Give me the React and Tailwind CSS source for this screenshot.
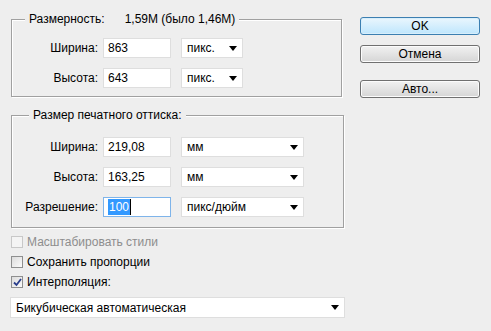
import React from "react";

function Arrow() {
  return (
    <svg width="8" height="5" viewBox="0 0 8 5" className="shrink-0">
      <path d="M0 0H8L4 5Z" fill="#000" />
    </svg>
  );
}

function Field({ value, focused }) {
  return (
    <div
      className={
        "w-[68px] h-[20px] bg-white border flex items-center pl-[4px] " +
        (focused ? "border-[#7eb4ea]" : "border-[#dedede]")
      }
    >
      {focused ? (
        <span className="bg-[#3399ff] text-white leading-[16px] px-[1px] border-r border-black">{value}</span>
      ) : (
        <span>{value}</span>
      )}
    </div>
  );
}

function Select({ value, width }) {
  return (
    <div
      className={
        "h-[20px] bg-white border border-[#dedede] flex items-center justify-between pl-[5px] pr-[5px] " + width
      }
    >
      <span>{value}</span>
      <Arrow />
    </div>
  );
}

function Row({ label, value, unit, selWidth, focused }) {
  return (
    <div className="flex items-center">
      <div className="w-[86px] text-right">{label}</div>
      <div className="ml-[5px]">
        <Field value={value} focused={focused} />
      </div>
      <div className="ml-[10px]">
        <Select value={unit} width={selWidth} />
      </div>
    </div>
  );
}

function Check({ label, checked, disabled }) {
  return (
    <div className="flex items-center h-[20px]">
      <div
        className={
          "w-[12px] h-[12px] border flex items-center justify-center " +
          (disabled
            ? "border-[#c8c8c8] bg-[#f4f4f4]"
            : "border-[#8e8f8f] bg-gradient-to-br from-[#dcdcdc] to-[#fbfbfb]")
        }
      >
        {checked && (
          <svg width="9" height="9" viewBox="0 0 9 9">
            <path d="M1 4.5L3.5 7L8 1" stroke="#2a3e8c" strokeWidth="1.8" fill="none" />
          </svg>
        )}
      </div>
      <span className={"ml-[4px] " + (disabled ? "text-[#8d8d8d]" : "")}>{label}</span>
    </div>
  );
}

function Button({ children, primary, className }) {
  return (
    <div
      className={
        "w-[120px] h-[18px] rounded-[3px] border flex items-center justify-center leading-none " +
        (primary
          ? "border-[#3c7fb1] bg-gradient-to-b from-[#eaf6fd] to-[#bee6fd] shadow-[inset_0_0_0_1px_#d7eefb]"
          : "border-[#707070] bg-gradient-to-b from-[#f2f2f2] to-[#d5d5d5] shadow-[inset_0_0_0_1px_#fcfcfc]") +
        " " +
        (className || "")
      }
    >
      {children}
    </div>
  );
}

export default function App() {
  return (
    <div
      className="w-[491px] h-[331px] bg-[#eeeeee] text-black text-[12px] flex overflow-hidden"
      style={{ fontFamily: '"Liberation Sans", Arial, sans-serif' }}
    >
      <div className="ml-[11px] w-[333px] flex flex-col">
        {/* Размерность */}
        <div className="mt-[19px] w-[331px] h-[78px] border border-[#a0a0a0] shadow-[inset_1px_1px_0_#fff,1px_1px_0_#fff]">
          <div className="-mt-[8px] ml-[13px] w-fit px-[4px] bg-[#eeeeee] leading-[14px] flex">
            <span>Размерность:</span>
            <span className="ml-[20px]">1,59M (было 1,46M)</span>
          </div>
          <div className="mt-[12px] flex flex-col gap-[10px]">
            <Row label="Ширина:" value="863" unit="пикс." selWidth="w-[62px]" />
            <Row label="Высота:" value="643" unit="пикс." selWidth="w-[62px]" />
          </div>
        </div>

        {/* Размер печатного оттиска */}
        <div className="mt-[18px] w-[333px] h-[113px] border border-[#a0a0a0] shadow-[inset_1px_1px_0_#fff,1px_1px_0_#fff]">
          <div className="-mt-[8px] ml-[17px] w-fit px-[4px] bg-[#eeeeee] leading-[14px]">
            Размер печатного оттиска:
          </div>
          <div className="mt-[15px] flex flex-col gap-[10px]">
            <Row label="Ширина:" value="219,08" unit="мм" selWidth="w-[123px]" />
            <Row label="Высота:" value="163,25" unit="мм" selWidth="w-[123px]" />
            <Row label="Разрешение:" value="100" unit="пикс/дюйм" selWidth="w-[123px]" focused />
          </div>
        </div>

        <div className="mt-[4px] flex flex-col">
          <Check label="Масштабировать стили" disabled />
          <Check label="Сохранить пропорции" />
          <Check label="Интерполяция:" checked />
        </div>

        <div className="mt-[5px] -ml-[1px]">
          <Select value="Бикубическая автоматическая" width="w-[335px] h-[21px]" />
        </div>
      </div>

      <div className="ml-[16px] mt-[17px] flex flex-col">
        <Button primary>OK</Button>
        <Button className="mt-[10px]">Отмена</Button>
        <Button className="mt-[17px]">Авто...</Button>
      </div>
    </div>
  );
}
